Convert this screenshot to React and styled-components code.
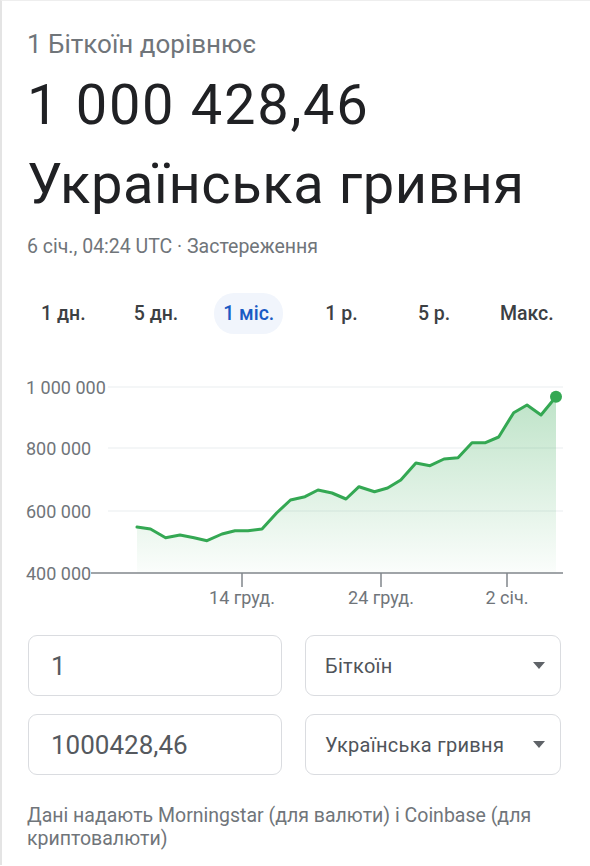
import styled, { createGlobalStyle } from "styled-components";

const GlobalStyle = createGlobalStyle`
  body {
    margin: 0;
    background: #fff;
    font-family: Roboto, "Noto Sans", Arial, sans-serif;
  }
`;

const points = [
  [137, 527], [150.5, 529], [165.6, 537.7], [180, 535], [194, 537.7],
  [207, 540.7], [222, 534], [235, 530.7], [248, 530.7], [262, 529],
  [276.6, 513], [290.5, 500], [305, 496.7], [318, 490], [332, 493],
  [346, 499], [359, 486.7], [374.5, 491.7], [387.6, 488], [400.8, 480],
  [415.9, 463], [430, 465.7], [444, 459], [458, 457.7], [472, 442.7],
  [485.5, 442.7], [498.7, 437], [513.7, 412.7], [527, 405], [541, 415],
  [556, 396.7],
];

const tabs = ["1 дн.", "5 дн.", "1 міс.", "1 р.", "5 р.", "Макс."];

const yLabels = [
  { text: "1 000 000", y: 387 },
  { text: "800 000", y: 448 },
  { text: "600 000", y: 511 },
  { text: "400 000", y: 573 },
];

const xTicks = [
  { text: "14 груд.", x: 242 },
  { text: "24 груд.", x: 381 },
  { text: "2 січ.", x: 507 },
];

const Root = styled.div`
  border-left: 2px solid #e4e4e4;
  border-top: 1px solid #eeeeee;
  min-height: 865px;
  box-sizing: border-box;
`;

const Header = styled.div`
  padding: 29px 0 0 25px;
`;

const Caption = styled.div`
  font-size: 26px;
  line-height: 28px;
  color: #70757a;
`;

const Headline = styled.div`
  margin-top: 8px;
  font-size: 56px;
  line-height: 79px;
  color: #202124;
  letter-spacing: 0.6px;

  span {
    display: block;
    white-space: nowrap;
  }
`;

const Amount = styled.span`
  letter-spacing: 1.7px;
`;

const Meta = styled.div`
  margin-top: 12px;
  font-size: 19.5px;
  line-height: 22px;
  color: #70757a;
`;

const Tabs = styled.div`
  display: grid;
  grid-template-columns: repeat(6, 92.7px);
  margin: 35px 0 0 15px;
`;

const Tab = styled.div`
  justify-self: center;
  height: 41px;
  padding: 0 ${(p) => (p.$active ? "9px" : "0")};
  border-radius: 20px;
  display: flex;
  align-items: center;
  font-size: 19.5px;
  font-weight: 500;
  color: ${(p) => (p.$active ? "#1a5bc4" : "#3c4043")};
  background: ${(p) => (p.$active ? "#f1f5fc" : "transparent")};
`;

const Chart = styled.svg`
  display: block;
  margin-top: 26px;
`;

const Converter = styled.div`
  display: grid;
  grid-template-columns: 254px 256px;
  grid-auto-rows: 61px;
  column-gap: 23px;
  row-gap: 18px;
  margin-left: 26px;
`;

const Field = styled.div`
  border: 1px solid #dadce0;
  border-radius: 9px;
  display: flex;
  align-items: center;
  justify-content: space-between;
  padding: 0 15px 0 ${(p) => (p.$select ? "19px" : "22px")};
  font-size: ${(p) => (p.$select ? "20px" : "26px")};
  font-weight: 400;
  letter-spacing: ${(p) => (p.$select ? "0.3px" : "0")};
  color: ${(p) => (p.$select ? "#50545a" : "#55595e")};
`;

const Caret = styled.span`
  width: 0;
  height: 0;
  border-left: 6px solid transparent;
  border-right: 6px solid transparent;
  border-top: 7px solid #5f6368;
`;

const Source = styled.p`
  margin: 29px 20px 0 25px;
  font-size: 19.5px;
  line-height: 23px;
  color: #70757a;
`;

function PriceChart() {
  const line = points.map((p) => p.join(",")).join(" ");
  const area = `137,573 ${line} 556,573`;
  const last = points[points.length - 1];
  return (
    <Chart width="588" height="275" viewBox="2 360 588 275">
      <defs>
        <linearGradient id="fill" x1="0" y1="0" x2="0" y2="1">
          <stop offset="0" stopColor="#34a853" stopOpacity="0.32" />
          <stop offset="1" stopColor="#34a853" stopOpacity="0.02" />
        </linearGradient>
      </defs>
      {yLabels.slice(0, 3).map((l) => (
        <line key={l.text} x1="108" x2="563" y1={l.y} y2={l.y} stroke="#f1f3f4" strokeWidth="1.5" />
      ))}
      {yLabels.map((l) => (
        <text key={l.text} x="26" y={l.y + 6.5} fontSize="18" fill="#70757a" fontFamily="Roboto, sans-serif">
          {l.text}
        </text>
      ))}
      <polygon points={area} fill="url(#fill)" />
      <line x1="91" x2="563" y1="573" y2="573" stroke="#80868b" strokeWidth="1.5" />
      {xTicks.map((t) => (
        <g key={t.text}>
          <line x1={t.x} x2={t.x} y1="573" y2="587" stroke="#80868b" strokeWidth="1.5" />
          <text x={t.x} y="604" fontSize="18" fill="#70757a" textAnchor="middle" fontFamily="Roboto, sans-serif">
            {t.text}
          </text>
        </g>
      ))}
      <polyline points={line} fill="none" stroke="#34a853" strokeWidth="3" strokeLinejoin="round" strokeLinecap="round" />
      <circle cx={last[0]} cy={last[1]} r="6" fill="#34a853" />
    </Chart>
  );
}

export default function App() {
  return (
    <Root>
      <GlobalStyle />
      <Header>
        <Caption>1 Біткоїн дорівнює</Caption>
        <Headline>
          <Amount>1 000 428,46</Amount>
          <span>Українська гривня</span>
        </Headline>
        <Meta>6 січ., 04:24 UTC · Застереження</Meta>
      </Header>
      <Tabs>
        {tabs.map((t) => (
          <Tab key={t} $active={t === "1 міс."}>
            {t}
          </Tab>
        ))}
      </Tabs>
      <PriceChart />
      <Converter>
        <Field>1</Field>
        <Field $select>
          Біткоїн
          <Caret />
        </Field>
        <Field>1000428,46</Field>
        <Field $select>
          Українська гривня
          <Caret />
        </Field>
      </Converter>
      <Source>Дані надають Morningstar (для валюти) і Coinbase (для криптовалюти)</Source>
    </Root>
  );
}
